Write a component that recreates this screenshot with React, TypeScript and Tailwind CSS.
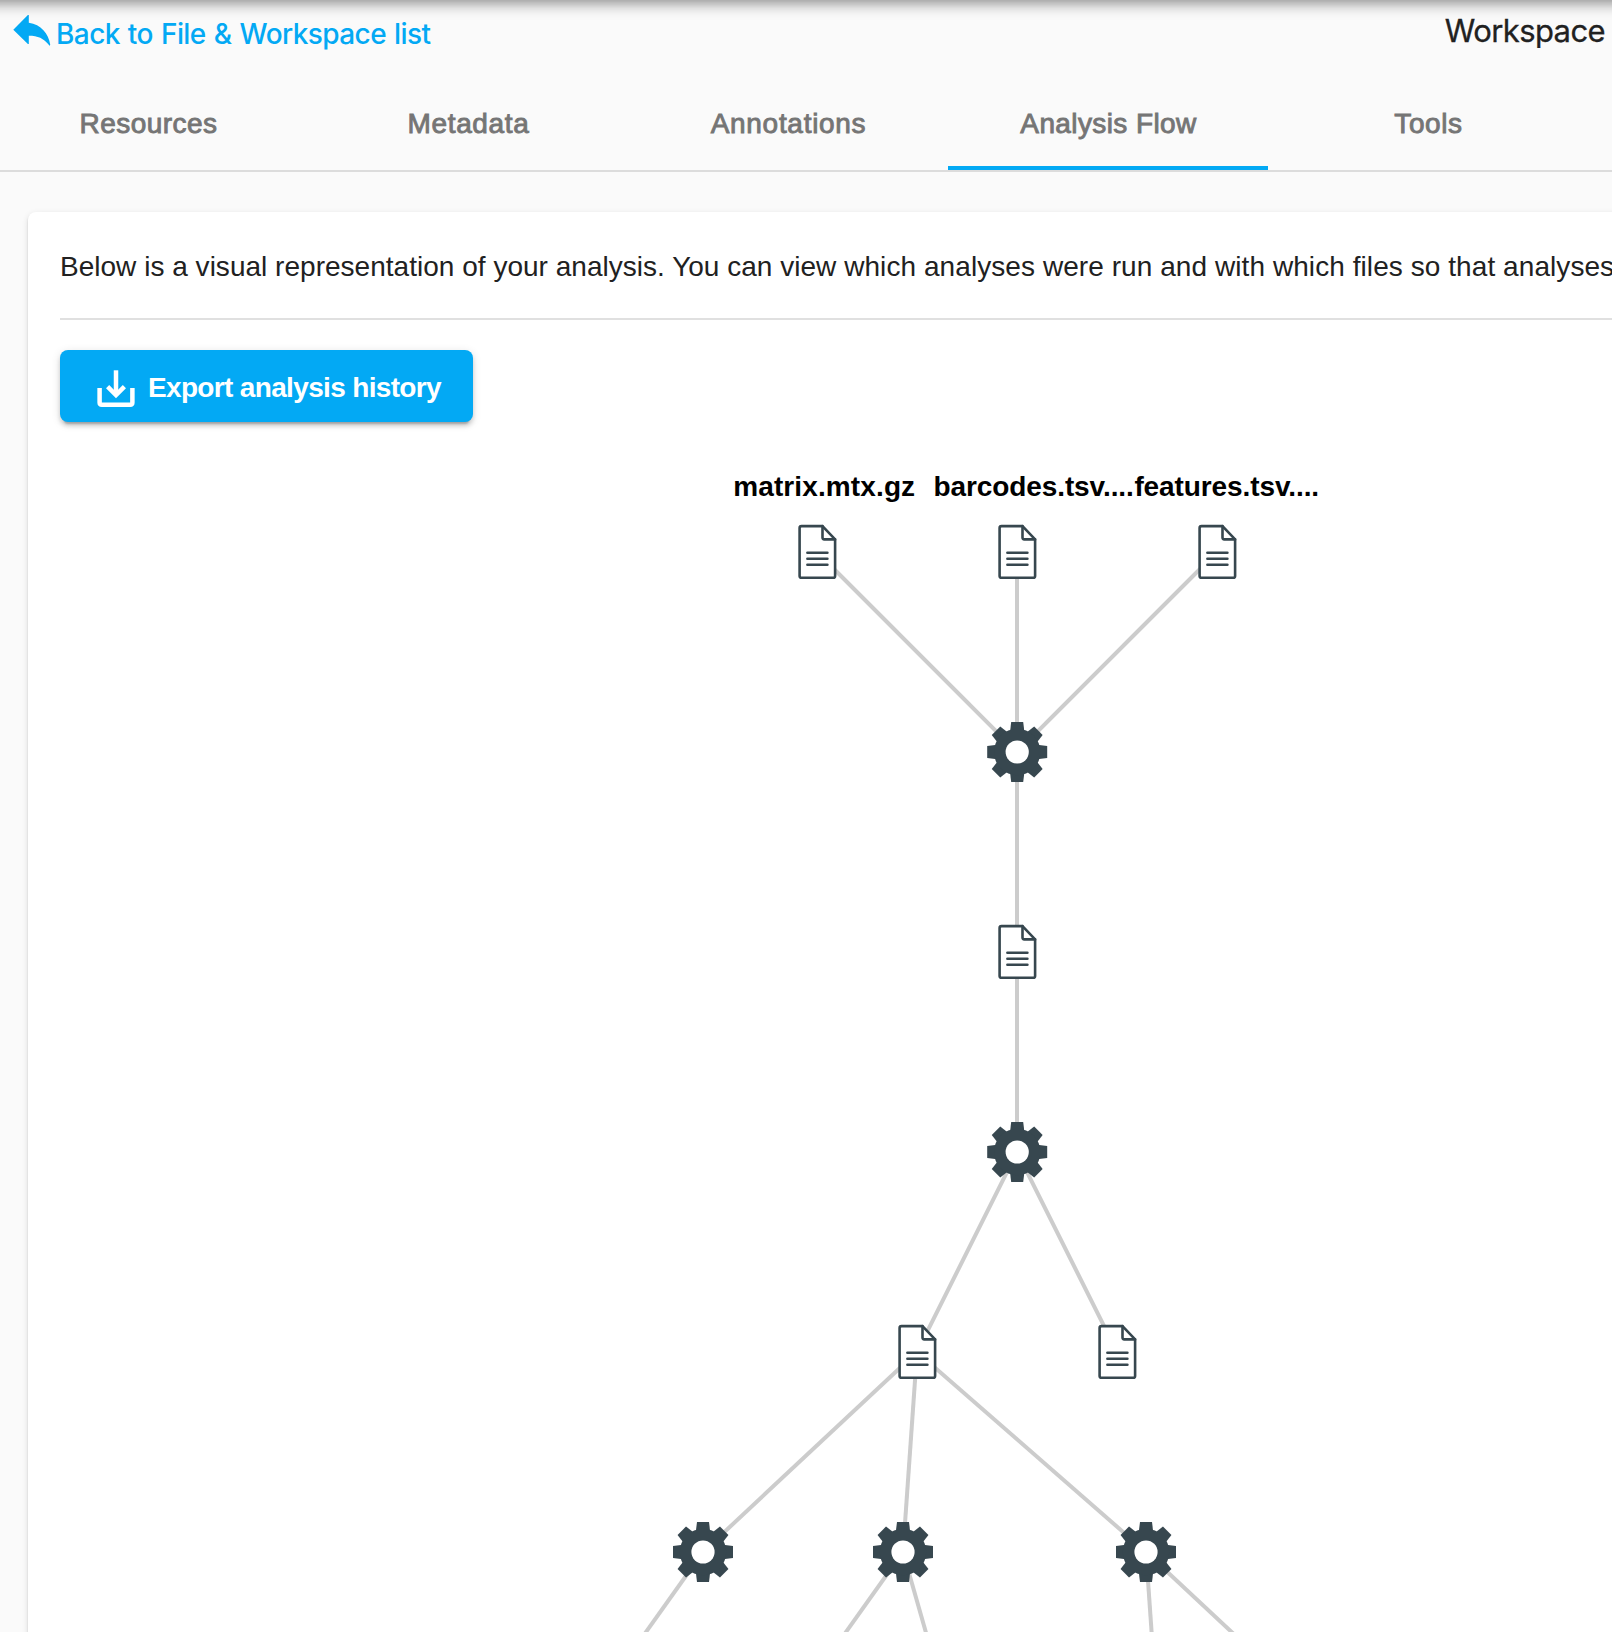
type NodeKind = "file" | "gear";

interface FlowNode {
  id: string;
  kind: NodeKind;
  x: number;
  y: number;
}

const ORIGIN_X = 60;
const ORIGIN_Y = 452;

const nodes: FlowNode[] = [
  { id: "matrix", kind: "file", x: 817, y: 552 },
  { id: "barcodes", kind: "file", x: 1017, y: 552 },
  { id: "features", kind: "file", x: 1217, y: 552 },
  { id: "load", kind: "gear", x: 1017.2, y: 752 },
  { id: "loaded", kind: "file", x: 1017, y: 952 },
  { id: "process", kind: "gear", x: 1017.2, y: 1152 },
  { id: "resultA", kind: "file", x: 917, y: 1352 },
  { id: "resultB", kind: "file", x: 1117, y: 1352 },
  { id: "stepA", kind: "gear", x: 703, y: 1552 },
  { id: "stepB", kind: "gear", x: 903, y: 1552 },
  { id: "stepC", kind: "gear", x: 1146, y: 1552 },
];

const edges: [number, number, number, number][] = [
  [817, 552, 1017, 752],
  [1017, 552, 1017, 752],
  [1217, 552, 1017, 752],
  [1017, 752, 1017, 952],
  [1017, 952, 1017, 1152],
  [1017, 1152, 917, 1352],
  [1017, 1152, 1117, 1352],
  [917, 1352, 703, 1552],
  [917, 1352, 903, 1552],
  [917, 1352, 1146, 1552],
  [703, 1552, 560.5, 1752],
  [903, 1552, 760.5, 1752],
  [903, 1552, 960, 1752],
  [1146, 1552, 1160, 1752],
  [1146, 1552, 1360, 1752],
];

const labels = [
  { text: "matrix.mtx.gz", x: 733.2, tracking: "tracking-[0.12px]" },
  { text: "barcodes.tsv....", x: 933.5, tracking: "tracking-[-0.1px]" },
  { text: "features.tsv....", x: 1134.4, tracking: "tracking-[-0.1px]" },
];

const tabs = [
  { name: "Resources", tracking: "tracking-[0.45px]" },
  { name: "Metadata", tracking: "tracking-[0.65px]" },
  { name: "Annotations", tracking: "tracking-[0.7px]" },
  { name: "Analysis Flow", tracking: "tracking-[0.4px]" },
  { name: "Tools", tracking: "tracking-[0.6px]" },
];

const TEETH = [0, 45, 90, 135, 180, 225, 270, 315];

function FileIcon() {
  return (
    <g fill="#fff" stroke="#37474f" strokeWidth="2.6" strokeLinejoin="round" strokeLinecap="round">
      <path d="M-15.5-25.9H5.5L18.1-12.6V24Q18.1 25.8 16.3 25.8H-15.5Q-17.4 25.8-17.4 24V-24.1Q-17.4-25.9-15.5-25.9Z" />
      <path d="M5.5-25.9V-14.4Q5.5-12.6 7.3-12.6H18.1" fill="none" />
      <path d="M-9.6 .7H10.4M-9.6 6.7H10.4M-9.6 12.7H10.4" />
    </g>
  );
}

function GearIcon() {
  return (
    <g fill="#37474f">
      {TEETH.map((angle) => (
        <path key={angle} d="M-6-30H6L7.2-20H-7.2Z" transform={`rotate(${angle})`} />
      ))}
      <circle r="23.2" />
      <circle r="11.6" fill="#fff" />
    </g>
  );
}

function BackIcon() {
  return (
    <svg className="h-[32px] w-[38px] shrink-0" viewBox="13 14 38 32" fill="#03a9f4">
      <path d="M13.3 29.7L27.9 15H28.8V22.8C41 24.5 48.5 33.5 50.2 44.6C50.2 46 49.6 45.9 49 45.1C43.5 38.2 38 35.7 28.8 35.7V44H27.9Z" />
    </svg>
  );
}

function ExportIcon() {
  return (
    <svg className="mt-1 h-[40px] w-[40px] shrink-0" viewBox="96 368 40 40" fill="none" stroke="#fff" strokeWidth="4.5">
      <path d="M99.6 388V402.6Q99.6 404.8 101.8 404.8H130.2Q132.4 404.8 132.4 402.6V388" />
      <path d="M116 370.3V394" />
      <path d="M107.6 386.7L116 395L124.4 386.7" />
    </svg>
  );
}

export default function App() {
  return (
    <div className="relative flex h-[1632px] w-[1612px] flex-col overflow-hidden bg-[#fafafa] font-['Liberation_Sans',Arial,sans-serif] text-[28px] whitespace-nowrap text-[#212121]">
      <div className="absolute -top-10 -right-10 -left-10 h-10 shadow-[0_4px_8px_-2px_rgba(0,0,0,0.2),0_8px_10px_0_rgba(0,0,0,0.14),0_2px_20px_0_rgba(0,0,0,0.12)]" />

      <header className="flex h-[76px] shrink-0 items-start justify-between pr-[7px] pl-[13px] font-['Inter',sans-serif]">
        <a className="flex items-start text-[#03a9f4]">
          <span className="flex pt-[14px]">
            <BackIcon />
          </span>
          <span className="pt-[14px] pl-[5px] leading-10 font-medium tracking-[-0.58px] [word-spacing:1.2px]">
            Back to File &amp; Workspace list
          </span>
        </a>
        <span className="pt-[11px] text-[31px] leading-10 tracking-[-0.6px] [-webkit-text-stroke:0.3px_#212121]">
          Workspace
        </span>
      </header>

      <nav className="-ml-3 flex h-24 w-[1920px] shrink-0 border-b-2 border-[#dcdcdc]">
        {tabs.map(({ name, tracking }) => (
          <div
            key={name}
            className={`flex h-[94px] w-80 justify-center pt-[32px] pl-px leading-8 text-[#757575] [-webkit-text-stroke:0.9px_#757575] ${tracking} ${
              name === "Analysis Flow" ? "border-b-4 border-[#03a9f4]" : ""
            }`}
          >
            {name}
          </div>
        ))}
      </nav>

      <main className="mt-10 ml-7 h-[1600px] w-[1800px] shrink-0 rounded-lg bg-white px-8 shadow-[0_4px_2px_-2px_rgba(0,0,0,0.2),0_2px_2px_0_rgba(0,0,0,0.14),0_2px_6px_0_rgba(0,0,0,0.12)]">
        <p className="h-[108px] border-b-2 border-[#e0e0e0] pt-[39px] leading-8">
          <span className="tracking-[0.02px]">Below is a visual representation of your analysis. You can view </span>
          <span className="tracking-[0.07px]">which analyses were run and with which files so that analyses</span>
        </p>

        <button className="mt-[30px] flex h-[72px] w-[413px] items-center rounded-lg bg-[#03a9f4] pl-9 font-bold tracking-[-0.66px] text-white shadow-[0_6px_2px_-4px_rgba(0,0,0,0.2),0_4px_4px_0_rgba(0,0,0,0.14),0_2px_10px_0_rgba(0,0,0,0.12)]">
          <ExportIcon />
          <span className="pt-1 pl-3">Export analysis history</span>
        </button>

        <section className="relative mt-[30px] h-[1200px]">
          <svg className="h-[1200px] w-[1552px]" viewBox="60 452 1552 1200">
            {edges.map(([x1, y1, x2, y2], i) => (
              <line key={i} x1={x1} y1={y1} x2={x2} y2={y2} stroke="#ccc" strokeWidth="4" />
            ))}
            {nodes.map((n) => (
              <g key={n.id} transform={`translate(${n.x} ${n.y})`}>
                {n.kind === "file" ? <FileIcon /> : <GearIcon />}
              </g>
            ))}
          </svg>
          {labels.map((l) => (
            <span
              key={l.text}
              className={`absolute leading-8 font-bold text-black ${l.tracking}`}
              style={{ left: l.x - ORIGIN_X, top: 471 - ORIGIN_Y }}
            >
              {l.text}
            </span>
          ))}
        </section>
      </main>
    </div>
  );
}
